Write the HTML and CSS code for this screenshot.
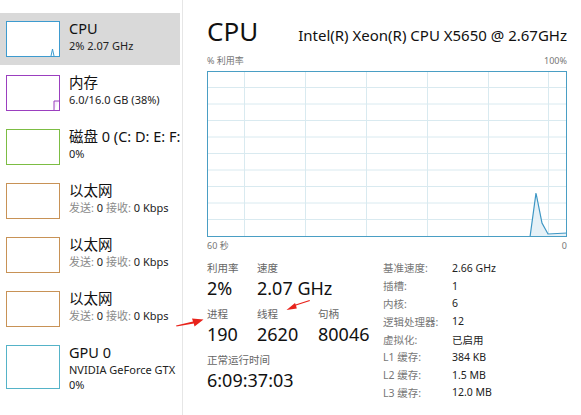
FILE: index.html
```html
<!DOCTYPE html>
<html lang="zh-CN">
<head>
<meta charset="utf-8">
<title>任务管理器 - CPU</title>
<link rel="stylesheet" href="styles.css">
</head>
<body>
<div class="app">
  <aside class="sidebar">
    <div class="item selected">
      <div class="thumb thumb-cpu">
        <svg width="52" height="34" viewBox="0 0 52 34"><polyline points="44,34 45.5,27 47,34" fill="none" stroke="#3d9bcf" stroke-width="1"/></svg>
      </div>
      <div class="info">
        <div class="name">CPU</div>
        <div class="sub">2% 2.07 GHz</div>
      </div>
    </div>
    <div class="item">
      <div class="thumb thumb-mem">
        <svg width="52" height="34" viewBox="0 0 52 34"><polyline points="47,34 47,25 52,25" fill="rgba(155,63,191,0.08)" stroke="#9b3fbf" stroke-width="1"/></svg>
      </div>
      <div class="info">
        <div class="name">内存</div>
        <div class="sub">6.0/16.0 GB (38%)</div>
      </div>
    </div>
    <div class="item">
      <div class="thumb thumb-disk"></div>
      <div class="info">
        <div class="name">磁盘 0 (C: D: E: F:</div>
        <div class="sub">0%</div>
      </div>
    </div>
    <div class="item">
      <div class="thumb thumb-net"></div>
      <div class="info">
        <div class="name">以太网</div>
        <div class="sub"><span class="muted">发送:</span> 0 <span class="muted">接收:</span> 0 Kbps</div>
      </div>
    </div>
    <div class="item">
      <div class="thumb thumb-net"></div>
      <div class="info">
        <div class="name">以太网</div>
        <div class="sub"><span class="muted">发送:</span> 0 <span class="muted">接收:</span> 0 Kbps</div>
      </div>
    </div>
    <div class="item">
      <div class="thumb thumb-net"></div>
      <div class="info">
        <div class="name">以太网</div>
        <div class="sub"><span class="muted">发送:</span> 0 <span class="muted">接收:</span> 0 Kbps</div>
      </div>
    </div>
    <div class="item item-gpu">
      <div class="thumb thumb-gpu"></div>
      <div class="info">
        <div class="name">GPU 0</div>
        <div class="sub">NVIDIA GeForce GTX</div>
        <div class="sub">0%</div>
      </div>
    </div>
  </aside>

  <main class="detail">
    <header class="head">
      <h1 class="title">CPU</h1>
      <div class="model">Intel(R) Xeon(R) CPU X5650 @ 2.67GHz</div>
    </header>
    <div class="axis axis-top"><span>% 利用率</span><span>100%</span></div>
    <div class="chart">
      <svg width="360" height="166" viewBox="0 0 360 166">
        <g stroke="#d9eaf0" stroke-width="1">
          <line x1="0" y1="16.5" x2="360" y2="16.5"/>
          <line x1="0" y1="33" x2="360" y2="33"/>
          <line x1="0" y1="49.5" x2="360" y2="49.5"/>
          <line x1="0" y1="66" x2="360" y2="66"/>
          <line x1="0" y1="82.5" x2="360" y2="82.5"/>
          <line x1="0" y1="99" x2="360" y2="99"/>
          <line x1="0" y1="115.5" x2="360" y2="115.5"/>
          <line x1="0" y1="132" x2="360" y2="132"/>
          <line x1="0" y1="148.5" x2="360" y2="148.5"/>
          <line x1="37.5" y1="0" x2="37.5" y2="166"/>
          <line x1="98.5" y1="0" x2="98.5" y2="166"/>
          <line x1="159.5" y1="0" x2="159.5" y2="166"/>
          <line x1="220.5" y1="0" x2="220.5" y2="166"/>
          <line x1="281.5" y1="0" x2="281.5" y2="166"/>
          <line x1="341.5" y1="0" x2="341.5" y2="166"/>
        </g>
        <polygon points="323,166 329,122 335,152 341,163 360,162 360,166" fill="#e6f1f7"/>
        <polyline points="323,166 329,122 335,152 341,163 360,162" fill="none" stroke="#3d96c4" stroke-width="1.2"/>
        <rect x="0.5" y="0.5" width="359" height="165" fill="none" stroke="#4a9ec4" stroke-width="1"/>
      </svg>
    </div>
    <div class="axis axis-bottom"><span>60 秒</span><span>0</span></div>

    <section class="stats">
      <div class="stats-left">
        <div class="row row-2">
          <div class="stat"><div class="label">利用率</div><div class="value">2%</div></div>
          <div class="stat"><div class="label">速度</div><div class="value">2.07 GHz</div></div>
        </div>
        <div class="row row-3">
          <div class="stat"><div class="label">进程</div><div class="value">190</div></div>
          <div class="stat"><div class="label">线程</div><div class="value">2620</div></div>
          <div class="stat"><div class="label">句柄</div><div class="value">80046</div></div>
        </div>
        <div class="row">
          <div class="stat"><div class="label">正常运行时间</div><div class="value">6:09:37:03</div></div>
        </div>
      </div>
      <dl class="specs">
        <dt>基准速度:</dt><dd>2.66 GHz</dd>
        <dt>插槽:</dt><dd>1</dd>
        <dt>内核:</dt><dd>6</dd>
        <dt>逻辑处理器:</dt><dd>12</dd>
        <dt>虚拟化:</dt><dd>已启用</dd>
        <dt>L1 缓存:</dt><dd>384 KB</dd>
        <dt>L2 缓存:</dt><dd>1.5 MB</dd>
        <dt>L3 缓存:</dt><dd>12.0 MB</dd>
      </dl>
    </section>
  </main>

  <svg class="arrows" width="581" height="415" viewBox="0 0 581 415">
    <g fill="#e8231b" stroke="none">
      <polygon points="176,325.5 193,321.5 192,318.5 203.5,319.5 194.5,326.5 193.8,323.6 176.5,326.5"/>
      <polygon points="310,301 296,305.5 296.8,308.4 286.5,310 295,303 295.6,304.6 309.5,300"/>
    </g>
  </svg>
</div>
</body>
</html>
```

FILE: styles.css
```css
* { box-sizing: border-box; }

html, body {
  margin: 0;
  padding: 0;
  background: #ffffff;
}

body {
  font-family: "Noto Sans", "Noto Sans CJK SC", sans-serif;
  color: #1a1a1a;
  width: 581px;
  height: 415px;
  overflow: hidden;
}

.app {
  position: relative;
  display: flex;
  width: 581px;
  height: 415px;
}

/* Sidebar */
.sidebar {
  width: 183px;
  flex: 0 0 183px;
  border-right: 1px solid #e6e6e6;
  padding-top: 13px;
  overflow: hidden;
}

.item {
  display: flex;
  align-items: flex-start;
  gap: 9px;
  height: 52px;
  margin-bottom: 2px;
  width: 180px;
  padding: 8px 0 0 6px;
  white-space: nowrap;
  overflow: hidden;
}

.item.selected { background: #d9d9d9; }

.item-gpu { height: 60px; }

.thumb {
  flex: 0 0 54px;
  width: 54px;
  height: 36px;
  border: 1px solid #4ca6d2;
  background: #ffffff;
  overflow: hidden;
}

.thumb svg { display: block; }

.thumb-cpu { border-color: #3d9bcf; }
.thumb-mem { border-color: #9b3fbf; }
.thumb-disk { border-color: #7cbd43; }
.thumb-net { border-color: #c89256; }
.thumb-gpu { border-color: #55b3c8; height: 44px; }

.info {
  min-width: 0;
}

.name {
  font-size: 14.5px;
  line-height: 18px;
  color: #111;
  margin-top: -2px;
}

.sub {
  font-size: 11px;
  line-height: 15px;
  margin-top: 1px;
  color: #222;
}

.item-gpu .sub + .sub { margin-top: 0; }

.muted { color: #8a8a8a; }

/* Detail panel */
.detail {
  flex: 1;
  padding: 15px 14px 0 24px;
  min-width: 0;
}

.head {
  display: flex;
  justify-content: space-between;
  align-items: baseline;
  height: 36px;
}

.title {
  margin: 0;
  font-weight: normal;
  font-size: 26px;
  line-height: 32px;
  color: #111;
}

.model {
  font-size: 15px;
  color: #111;
}

.axis {
  display: flex;
  justify-content: space-between;
  font-size: 9px;
  color: #777;
  width: 360px;
}

.axis-top {
  line-height: 12px;
  margin-top: 4px;
  margin-bottom: 4px;
}

.axis-bottom {
  line-height: 12px;
  margin-top: 3px;
}

.chart {
  width: 360px;
  height: 166px;
}

.chart svg { display: block; }

/* Stats */
.stats {
  display: flex;
  margin-top: 9px;
}

.stats-left {
  width: 176px;
  display: flex;
  flex-direction: column;
  gap: 4px;
}

.row {
  display: flex;
}

.row-2 .stat:first-child { width: 50px; }
.row-3 .stat:first-child { width: 50px; }
.row-3 .stat:nth-child(2) { width: 61px; }

.label {
  font-size: 10.5px;
  line-height: 14px;
  color: #666;
}

.value {
  font-size: 18px;
  line-height: 30px;
  color: #111;
  margin-top: -2px;
}

.specs {
  margin: -2px 0 0 0;
  display: grid;
  grid-template-columns: 69px auto;
  grid-auto-rows: 17.8px;
  align-items: center;
  font-size: 10.5px;
}

.specs dt {
  color: #777;
  margin: 0;
}

.specs dd {
  margin: 0;
  color: #222;
}

/* Annotation arrows overlay */
.arrows {
  position: absolute;
  left: 0;
  top: 0;
  pointer-events: none;
}
```
